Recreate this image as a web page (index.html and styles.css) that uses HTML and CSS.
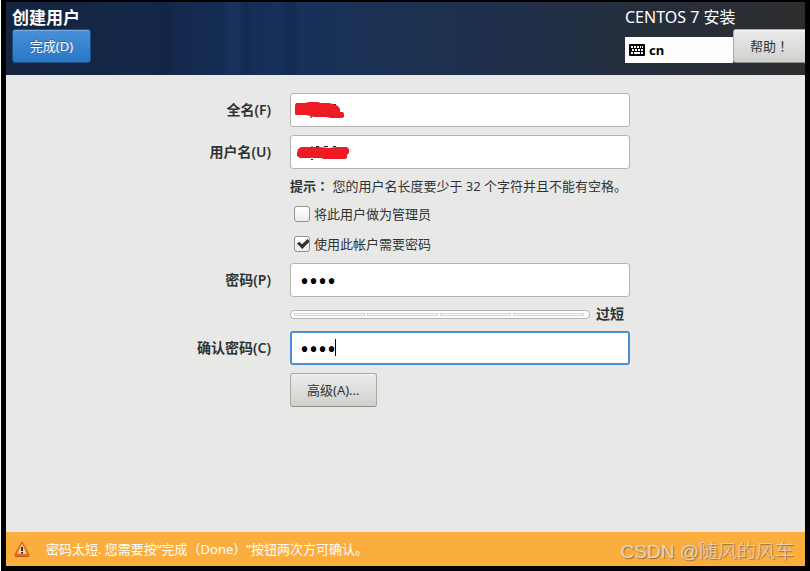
FILE: index.html
```
<!DOCTYPE html>
<html lang="zh-CN">
<head>
    <meta charset="UTF-8">
    <meta name="viewport" content="width=device-width, initial-scale=1.0">
    <title>创建用户</title>
    <link rel="stylesheet" href="styles.css">
</head>
<body>

    <div class="screen">

        <!-- Header -->
        <header class="header">
            <div class="header-left">
                <h1 class="page-title">创建用户</h1>
                <button type="button" class="btn btn-primary">完成(D)</button>
            </div>
            <div class="header-right">
                <div class="product-name">CENTOS 7 安装</div>
                <div class="header-tools">
                    <button type="button" class="keyboard-layout">
                        <svg class="keyboard-icon" viewBox="0 0 16 12" aria-hidden="true">
                            <rect width="16" height="12" rx="1" fill="#000"/>
                            <path fill="#fff" d="M2 2h2v2H2zM5 2h2v2H5zM8 2h2v2H8zM11 2h1v2h-1zM13 2h1v2h-1zM3 5h2v2H3zM6 5h2v2H6zM9 5h2v2H9zM12 5h2v2h-2zM2 8h2v2H2zM5 8h6v2H5zM12 8h2v2h-2z"/>
                        </svg>
                        cn
                    </button>
                    <button type="button" class="btn btn-help" lang="zh-Hant">帮助！</button>
                </div>
            </div>
        </header>

        <!-- User form -->
        <main class="content">
            <form class="user-form">
                <label class="field-label" for="full-name">全名(F)</label>
                <div class="field">
                    <input type="text" id="full-name" class="text-input">
                    <svg class="scribble" viewBox="0 0 60 34" aria-hidden="true">
                        <path d="M22 22v2h-2M42 11.500h4" fill="none" stroke="#222"/>
                        <path fill="#ed1c24" d="M5 12l1-2 9 0 4-1 9 0 3 1 8 0 4 1 5 2 2 3 0 3 3 0 1 2v3l-2 1-11 0-5-1-11 0-9-2-10 0-1-1z"/>
                    </svg>
                </div>

                <label class="field-label" for="user-name">用户名(U)</label>
                <div class="field">
                    <input type="text" id="user-name" class="text-input">
                    <svg class="scribble" viewBox="0 0 60 34" aria-hidden="true">
                        <path d="M22 11v2M26 11.500h3M34 11.500h4M43 11.500h3M21 24.500h2" fill="none" stroke="#222"/>
                        <path fill="#ed1c24" d="M7 18l1-4 3-2 18 0 10 1 8-1 10 0 2 2v4l-2 2 0 3-2 1-22 0-1-1-22 0-3-2z"/>
                    </svg>
                </div>

                <p class="hint"><b lang="zh-Hant">提示：</b> 您的用户名长度要少于 32 个字符并且不能有空格。</p>

                <div class="check-row">
                    <input type="checkbox" id="is-admin" class="checkbox">
                    <label for="is-admin">将此用户做为管理员</label>
                </div>
                <div class="check-row">
                    <input type="checkbox" id="need-password" class="checkbox" checked>
                    <label for="need-password">使用此帐户需要密码</label>
                </div>

                <label class="field-label" for="password">密码(P)</label>
                <div class="field">
                    <input type="password" id="password" class="text-input" value="1234">
                </div>

                <div class="strength">
                    <div class="strength-bar">
                        <span></span><span></span><span></span><span></span>
                    </div>
                    <b class="strength-text">过短</b>
                </div>

                <label class="field-label" for="confirm">确认密码(C)</label>
                <div class="field">
                    <input type="password" id="confirm" class="text-input active" value="1234">
                    <span class="caret"></span>
                </div>

                <button type="button" class="btn btn-advanced">高级(A)...</button>
            </form>
        </main>

        <!-- Warning bar -->
        <footer class="warning-bar">
            <svg class="warning-icon" viewBox="0 0 16 16" aria-hidden="true">
                <defs>
                    <linearGradient id="warn" x1="0" y1="0" x2="0" y2="1">
                        <stop offset="0" stop-color="#f8a04a"/>
                        <stop offset="1" stop-color="#e0600c"/>
                    </linearGradient>
                </defs>
                <path d="M8 1.2L15 14H1z" fill="url(#warn)" stroke="#e2701c" stroke-width="1.6" stroke-linejoin="round"/>
                <path d="M8 3L12.800 12.700H3.200z" fill="#f6cfa4"/>
                <path d="M7 6h2v4H7zM7 11h2v1.600H7z" fill="#333"/>
                <path d="M1 15.300h14" stroke="#a8480a"/>
            </svg>
            <span>密码太短. 您需要按“完成（Done）”按钮两次方可确认。</span>
            <span class="watermark">CSDN @随风的风车</span>
        </footer>

    </div>

</body>
</html>
```
FILE: styles.css
```
/* General */
* {
    box-sizing: border-box;
}

body {
    margin: 0;
    background-color: #fff;
    font-family: "Noto Sans", "Noto Sans CJK SC", sans-serif;
    font-size: 13px;
    line-height: 18px;
    color: #2e3436;
    text-spacing-trim: space-all;
}

button,
input {
    font: inherit;
    color: inherit;
}

.screen {
    display: flex;
    flex-direction: column;
    min-height: 100vh;
    margin-left: 1px;
    border: solid #000;
    border-width: 2px 5px 5px;
    background-color: #e8e8e6;
}

/* Header */
.header {
    display: flex;
    justify-content: space-between;
    padding: 4px 0 12px 6px;
    color: #fff;
    background:
        linear-gradient(90deg, transparent 18%, rgba(0, 0, 0, 0.08) 19% 20%, transparent 21% 27%, rgba(50, 110, 180, 0.07) 28% 29%, rgba(0, 0, 0, 0.07) 30%, transparent 31% 34%, rgba(0, 0, 0, 0.08) 35% 36%, transparent 37%),
        linear-gradient(90deg, #15243f 0%, #14284a 20%, #15305c 34%, #1c3254 46%, #202f49 64%, #252e3c 80%, #2d2d2e 100%);
}

.header-right {
    width: 180px;
}

.page-title,
.product-name {
    margin: 0;
    line-height: 23px;
}

.page-title {
    font-size: 17px;
    font-weight: bold;
}

.product-name {
    font-size: 16px;
}

.header-tools {
    display: flex;
    align-items: flex-end;
}

.keyboard-layout {
    display: flex;
    flex: 1;
    align-items: center;
    gap: 4px;
    height: 26px;
    padding: 0 4px;
    border: none;
    background-color: #fdfdfd;
    color: #000;
    font-weight: bold;
}

.keyboard-icon {
    width: 16px;
    height: 12px;
}

/* Buttons */
.btn {
    height: 34px;
    padding: 0 16px;
    border: 1px solid #a9a9a5;
    border-bottom-color: #8f8f8b;
    border-radius: 3px;
    background: linear-gradient(#ebebea, #d0d0ce);
    box-shadow: inset 0 1px #f6f6f5;
    color: #2e3436;
    white-space: nowrap;
}

.btn-primary {
    min-width: 79px;
    border-color: #1c5187;
    background: linear-gradient(#4a90d9, #2a76c6);
    box-shadow: inset 0 1px #76abe2;
    color: #fff;
    text-shadow: 0 -1px rgba(0, 0, 0, 0.3);
}

.btn-help {
    width: 72px;
    border-right: none;
    border-radius: 3px 0 0 3px;
}

.btn-advanced {
    grid-column: 2;
    justify-self: start;
}

/* Form */
.content {
    flex: 1;
    padding: 18px 0;
}

.user-form {
    display: grid;
    grid-template-columns: 90px 340px;
    gap: 8px 19px;
    justify-content: center;
    align-items: center;
}

.field-label {
    text-align: right;
    font-size: 14px;
    font-weight: 600;
    white-space: nowrap;
}

.field {
    position: relative;
}

.text-input {
    display: block;
    width: 100%;
    height: 34px;
    padding: 0 9px;
    border: 1px solid #b4b4b0;
    border-radius: 3px;
    background-color: #fff;
    color: #000;
    outline: none;
}

.text-input[type="password"] {
    font-family: "Noto Sans", sans-serif;
    font-size: 24px;
}

.text-input.active {
    padding: 0 8px;
    border: 2px solid #4a90d9;
}

.scribble {
    position: absolute;
    top: 0;
    left: 0;
    width: 60px;
    height: 34px;
}

.caret {
    position: absolute;
    top: 8px;
    left: 45px;
    width: 1px;
    height: 17px;
    background-color: #000;
}

.hint,
.check-row,
.strength {
    grid-column: 2;
}

.hint {
    margin: 0;
    white-space: nowrap;
}

.check-row {
    display: flex;
    align-items: center;
    gap: 4px;
    height: 22px;
    padding-left: 4px;
}

.checkbox {
    appearance: none;
    width: 16px;
    height: 16px;
    margin: 0;
    border: 1px solid #92928e;
    border-radius: 3px;
    background: linear-gradient(#fff, #ececea);
}

.checkbox:checked::before {
    content: "";
    display: block;
    width: 12px;
    height: 10px;
    margin: 2px 0 0 2px;
    background-color: #2e3436;
    clip-path: polygon(0 45%, 18% 28%, 42% 52%, 88% 0, 100% 16%, 100% 32%, 44% 100%);
}

/* Password strength */
.strength {
    display: flex;
    align-items: center;
    gap: 6px;
}

.strength-bar {
    display: flex;
    gap: 2px;
    width: 300px;
    height: 9px;
    padding: 2px 5px 2px 3px;
    border: 1px solid #b4b4b0;
    border-radius: 4px;
    background-color: #fff;
}

.strength-bar span {
    flex: 1;
    border: 1px solid #d3d3d1;
}

.strength-text {
    font-size: 14px;
}

/* Warning bar */
.warning-bar {
    position: relative;
    display: flex;
    align-items: center;
    gap: 16px;
    height: 34px;
    padding: 0 8px;
    background-color: #fbad3e;
    color: #fff;
}

.warning-icon {
    width: 16px;
    height: 16px;
}

.watermark {
    position: absolute;
    right: 11px;
    bottom: 1px;
    font-family: "Liberation Sans", "Noto Sans CJK SC", sans-serif;
    font-size: 19px;
    font-weight: 300;
    line-height: 26px;
    color: #e4d4bd;
    text-shadow: 1px 1px 1px #94713d;
}
```
